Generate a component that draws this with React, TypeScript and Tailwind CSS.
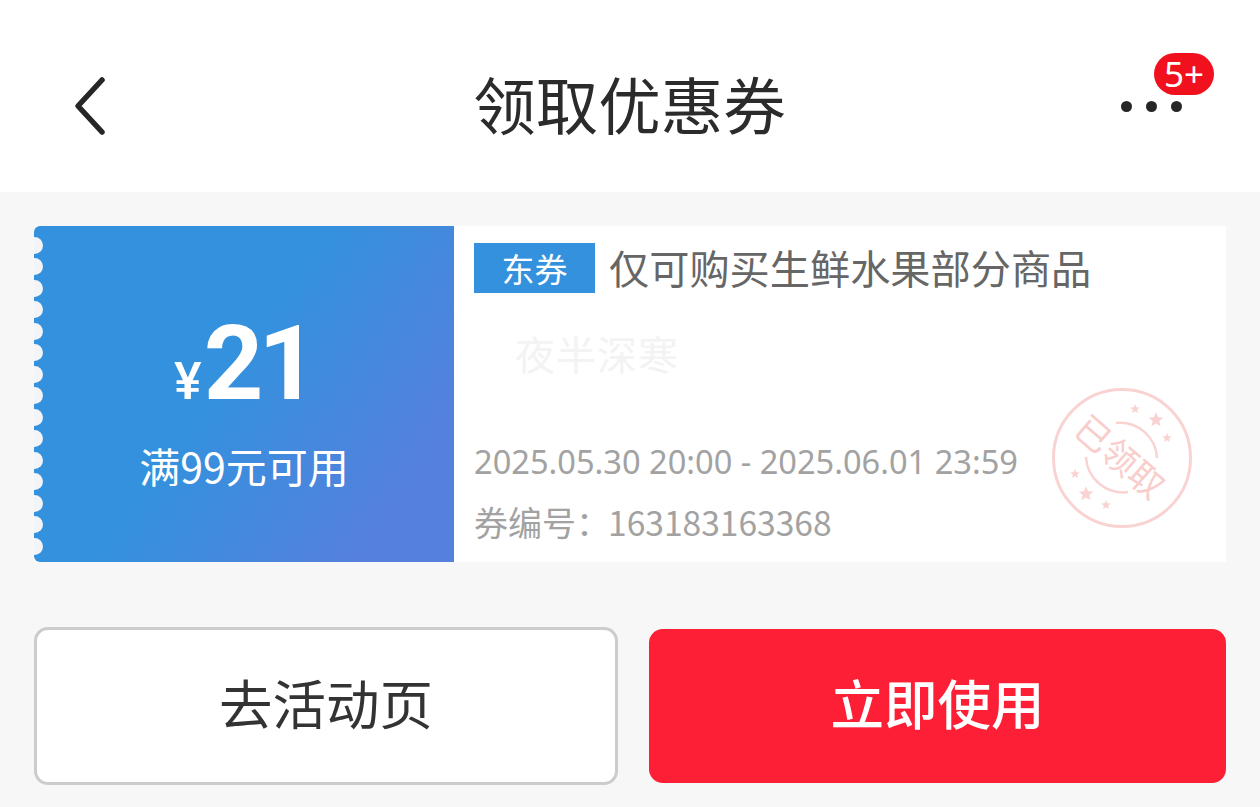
const cjk = "font-['Noto_Sans_CJK_SC','Noto_Sans',sans-serif]";

function Stamp() {
  const stars: [number, number, number][] = [
    [84, 22, 4.5], [105, 33, 7], [116, 51, 4.5], [24, 87, 4.5], [35, 107, 7], [55, 118, 4.5],
  ];
  return (
    <svg width="142" height="142" viewBox="0 0 142 142" className="absolute right-[33px] bottom-[33px]">
      <circle cx="71" cy="71" r="68.5" fill="none" stroke="#f9d3d1" strokeWidth="3" />
      <path d="M65 36 A37 37 0 0 1 106 71" fill="none" stroke="#f9d3d1" strokeWidth="2.5" />
      <path d="M35 70 A37 37 0 0 0 77 105" fill="none" stroke="#f9d3d1" strokeWidth="2.5" />
      {stars.map(([x, y, r], i) => (
        <polygon
          key={i}
          fill="#f9d3d1"
          points={[0, 1, 2, 3, 4, 5, 6, 7, 8, 9]
            .map((k) => {
              const a = (Math.PI / 5) * k - Math.PI / 2;
              const d = k % 2 ? r * 0.5 : r * 1.1;
              return `${x + Math.cos(a) * d},${y + Math.sin(a) * d}`;
            })
            .join(" ")}
        />
      ))}
      <text
        x="69"
        y="83"
        textAnchor="middle"
        fontSize="35"
        fill="#f8cdcb"
        transform="rotate(41 69 70)"
        fontFamily="'Noto Sans CJK SC', sans-serif"
      >
        已领取
      </text>
    </svg>
  );
}

export default function App() {
  return (
    <div className={`w-[1260px] h-[807px] overflow-hidden bg-[#f7f7f7] ${cjk}`}>
      <header className="h-[192px] bg-white flex items-center justify-between pt-[20px] pl-[72px] pr-[78px] relative">
        <svg width="36" height="60" viewBox="0 0 36 60" fill="none" stroke="#262626" strokeWidth="5.5" strokeLinecap="round" strokeLinejoin="round">
          <path d="M30 4 L6 30 L30 56" />
        </svg>
        <h1 className="text-[62.5px] leading-none text-[#2b2b2b] mb-[6px] ml-[30px]">领取优惠券</h1>
        <div className="relative flex gap-[14px] mt-[0px]">
          <span className="w-[11px] h-[11px] rounded-full bg-[#262626]" />
          <span className="w-[11px] h-[11px] rounded-full bg-[#262626]" />
          <span className="w-[11px] h-[11px] rounded-full bg-[#262626]" />
          <span className="absolute left-[33px] top-[-48px] w-[60px] h-[42px] rounded-full bg-[#f0101e] text-white text-[35px] leading-[42px] text-center font-['Noto_Sans',sans-serif]">
            5+
          </span>
        </div>
      </header>

      <main className="px-[34px] pt-[34px]">
        <section className="flex h-[336px] bg-white">
          <div className="relative w-[420px] shrink-0 flex flex-col items-center justify-center rounded-l-[6px] bg-[linear-gradient(125deg,#3491dd_0%,#3491dd_45%,#5580dd_85%,#5580dd_100%)] text-white">
            <div className="absolute left-0 top-[10.5px] flex flex-col gap-[4.5px]">
              {Array.from({ length: 15 }).map((_, i) => (
                <span key={i} className="w-[9px] h-[17px] rounded-r-full bg-[#f2f4f7]" />
              ))}
            </div>
            <div className="flex items-baseline mt-[13px] font-['Roboto',sans-serif] ml-[-1px]">
              <span className="text-[52px] leading-none mr-[2px] font-medium">¥</span>
              <span className="text-[104px] leading-[104px] font-bold tracking-[-5px]">21</span>
            </div>
            <div className="text-[41px] leading-[50px] mt-[24px]">满99元可用</div>
          </div>

          <div className="relative flex-1 flex flex-col pl-[20px]">
            <div className="flex items-center pt-[17px]">
              <span className="w-[121px] h-[50px] bg-[#3491dd] text-white text-[33px] leading-[50px] text-center">东券</span>
              <span className="ml-[14px] text-[40.2px] leading-[50px] text-[#666666] whitespace-nowrap mt-[-3px]">仅可购买生鲜水果部分商品</span>
            </div>
            <div className="mt-[35px] ml-[41px] text-[40px] leading-[50px] text-[#f3f3f3] tracking-[1px]">夜半深寒</div>
            <div className="mt-auto pb-[10px] text-[#a2a2a2]">
              <div className="text-[32.6px] leading-[60px] font-['Noto_Sans',sans-serif]">2025.05.30 20:00 - 2025.06.01 23:59</div>
              <div className="text-[34px] leading-[60px]">券编号：<span className="ml-[-2px] text-[33.6px]">163183163368</span></div>
            </div>
            <Stamp />
          </div>
        </section>

        <div className="flex items-center gap-[31px] mt-[65px]">
          <button className="w-[584px] h-[158px] shrink-0 bg-white border-[3px] border-[#cccccc] rounded-[14px] text-[53.5px] text-[#333333] leading-none pb-[8px]">
            去活动页
          </button>
          <button className="flex-1 h-[154px] bg-[#fd1f35] rounded-[14px] text-[53.5px] text-white leading-none font-medium pb-[8px]">
            立即使用
          </button>
        </div>
      </main>
    </div>
  );
}
